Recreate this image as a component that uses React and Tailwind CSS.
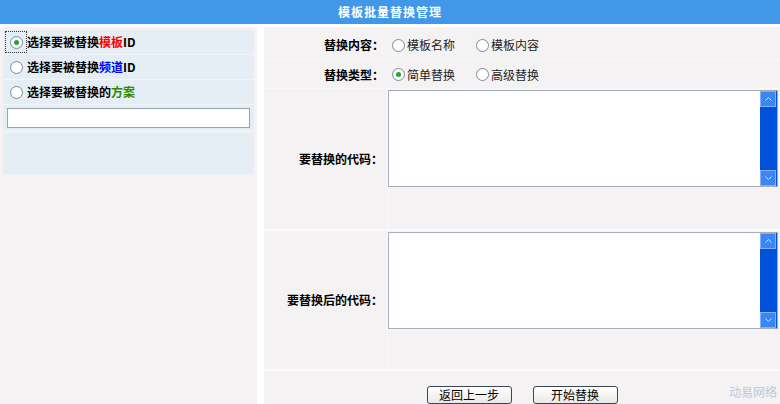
import React from 'react';

const font = { fontFamily: '"Noto Sans CJK SC", "Liberation Sans", sans-serif' };

// round XP-style radio: grey ring, green dot when checked
const Radio = ({ checked }) => (
    <span className="inline-flex items-center justify-center w-[13px] h-[13px] rounded-full border border-[#7a8a9c] bg-white shrink-0">
        {checked && <span className="w-[5px] h-[5px] rounded-full bg-[#2aa52a]" />}
    </span>
);

const Option = ({ checked, children }) => (
    <label className="flex items-center gap-[2px] text-[12px] text-[#222] leading-none">
        <Radio checked={checked} />
        <span>{children}</span>
    </label>
);

const ScrollBtn = ({ down }) => (
    <div className="w-[16px] h-[16px] bg-[#3b86f2] border border-[#7fb0f8] flex items-center justify-center">
        <svg width="7" height="4" viewBox="0 0 7 4">
            <path d={down ? 'M0.5 0.5 L3.5 3.5 L6.5 0.5' : 'M0.5 3.5 L3.5 0.5 L6.5 3.5'} fill="none" stroke="#cfe0fb" strokeWidth="1" />
        </svg>
    </div>
);

const CodeBox = () => (
    <div className="flex h-[97px] w-[390px] border border-[#a4adb8] bg-white">
        <textarea className="flex-1 resize-none outline-none bg-white" />
        <div className="w-[17px] bg-[#0052db] flex flex-col justify-between">
            <ScrollBtn />
            <ScrollBtn down />
        </div>
    </div>
);

const SourceRow = ({ checked, children }) => (
    <div className="h-[25px] flex items-center border-b border-[#f2f5f9]">
        <div className={`flex items-center h-[22px] pl-[4px] pr-[3px] ml-[2px] ${checked ? 'border border-dotted border-[#333]' : 'border border-transparent'}`}>
            <Radio checked={checked} />
        </div>
        <span className="text-[12px] font-bold text-black leading-none">{children}</span>
    </div>
);

export default function App() {
    return (
        <div className="w-[780px] h-[404px] bg-white overflow-hidden relative" style={font}>
            <div className="h-[24px] bg-[#4197e8] flex items-center justify-center">
                <span className="text-white text-[12px] font-bold tracking-[1px]">模板批量替换管理</span>
            </div>

            <div className="flex h-[377px] mt-[3px]">
                {/* source picker */}
                <div className="w-[257px] bg-[#f4f2f3] pt-[3px] pl-[3px] pr-[3px]">
                    <div className="bg-[#e5edf5]">
                        <SourceRow checked>
                            选择要被替换<span className="text-[#ff0000]">模板</span>ID
                        </SourceRow>
                        <SourceRow>
                            选择要被替换<span className="text-[#0000ff]">频道</span>ID
                        </SourceRow>
                        <SourceRow>
                            选择要被替换的<span className="text-[#2e8b00]">方案</span>
                        </SourceRow>
                        <div className="h-[28px] flex items-center px-[4px] border-b-[3px] border-[#eef3f8]">
                            <input className="w-full h-[20px] border border-[#98a3ae] bg-white outline-none" />
                        </div>
                        <div className="h-[42px] border-b-[1px] border-[#eef3f8]" />
                    </div>
                </div>

                <div className="w-[7px]" />

                {/* replace form */}
                <div className="flex-1 bg-[#f4f2f3] flex flex-col relative pt-[3px]">
                    <div className="grid grid-cols-[124px_1fr] h-[31px] border-b border-[#faf9fa]">
                        <div className="flex items-center justify-end pr-[4px] text-[12px] font-bold text-black">替换内容：</div>
                        <div className="flex items-center gap-[21px] pl-[4px]">
                            <Option>模板名称</Option>
                            <Option>模板内容</Option>
                        </div>
                    </div>
                    <div className="grid grid-cols-[124px_1fr] h-[28px] border-b border-[#faf9fa]">
                        <div className="flex items-center justify-end pr-[4px] text-[12px] font-bold text-black">替换类型：</div>
                        <div className="flex items-center gap-[21px] pl-[4px]">
                            <Option checked>简单替换</Option>
                            <Option>高级替换</Option>
                        </div>
                    </div>
                    <div className="grid grid-cols-[124px_1fr] h-[142px] border-b-2 border-[#fbfafb]">
                        <div className="flex items-center justify-end pr-[4px] text-[12px] font-bold text-black border-r border-[#fbfafb]">要替换的代码：</div>
                        <div className="pt-[1px]">
                            <CodeBox />
                        </div>
                    </div>
                    <div className="grid grid-cols-[124px_1fr] h-[140px] border-b-2 border-[#fbfafb]">
                        <div className="flex items-center justify-end pr-[4px] text-[12px] font-bold text-black border-r border-[#fbfafb]">要替换后的代码：</div>
                        <div className="pt-[1px]">
                            <CodeBox />
                        </div>
                    </div>
                    <div className="flex-1 flex justify-center items-start pt-[15px] gap-[21px]">
                        <button className="w-[85px] h-[18px] rounded-[3px] border border-[#3a4656] bg-gradient-to-b from-white to-[#ebe9e4] text-[12px] text-black leading-none">返回上一步</button>
                        <button className="w-[85px] h-[18px] rounded-[3px] border border-[#3a4656] bg-gradient-to-b from-white to-[#ebe9e4] text-[12px] text-black leading-none">开始替换</button>
                    </div>
                    <span className="absolute right-[3px] bottom-[3px] text-[12px] text-[#b9c9dd]">动易网络</span>
                </div>
            </div>
        </div>
    );
}
